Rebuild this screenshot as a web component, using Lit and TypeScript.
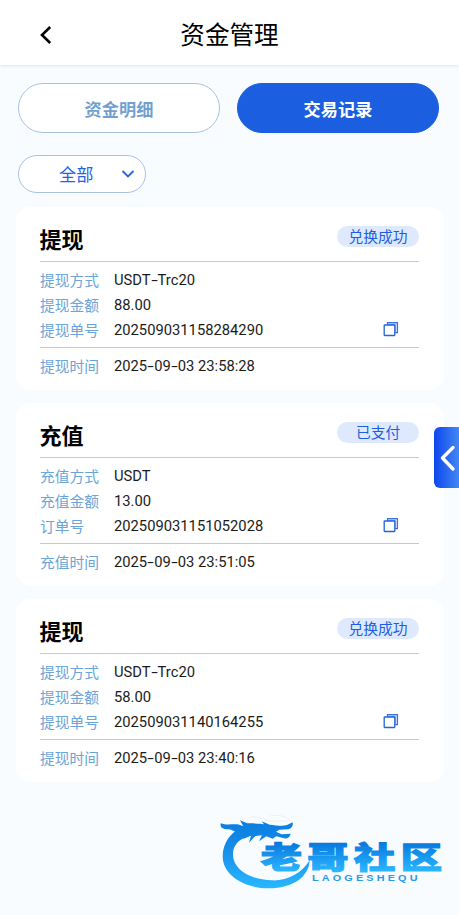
import { LitElement, html, css, svg, nothing } from "lit";
import { customElement, property, state } from "lit/decorators.js";

interface FundRecord {
  title: string;
  status: string;
  rows: { label: string; value: string; copy?: boolean }[];
  timeLabel: string;
  time: string;
}

const RECORDS: FundRecord[] = [
  {
    title: "提现",
    status: "兑换成功",
    rows: [
      { label: "提现方式", value: "USDT-Trc20" },
      { label: "提现金额", value: "88.00" },
      { label: "提现单号", value: "202509031158284290", copy: true },
    ],
    timeLabel: "提现时间",
    time: "2025-09-03 23:58:28",
  },
  {
    title: "充值",
    status: "已支付",
    rows: [
      { label: "充值方式", value: "USDT" },
      { label: "充值金额", value: "13.00" },
      { label: "订单号", value: "202509031151052028", copy: true },
    ],
    timeLabel: "充值时间",
    time: "2025-09-03 23:51:05",
  },
  {
    title: "提现",
    status: "兑换成功",
    rows: [
      { label: "提现方式", value: "USDT-Trc20" },
      { label: "提现金额", value: "58.00" },
      { label: "提现单号", value: "202509031140164255", copy: true },
    ],
    timeLabel: "提现时间",
    time: "2025-09-03 23:40:16",
  },
];

// Roboto's hyphen is very short, so hyphens get a wider box of their own
const wideHyphens = (text: string) =>
  text
    .split("-")
    .map((part, i) => (i ? html`<span class="hyphen">-</span>${part}` : part));

@customElement("record-card")
class RecordCard extends LitElement {
  static styles = css`
    :host {
      display: block;
      box-sizing: border-box;
      height: 183px;
      padding: 0 25px 0 24px;
      border-radius: 15px;
      background: #fff;
      font-size: 14.75px;
    }

    .head {
      display: flex;
      justify-content: space-between;
      box-sizing: border-box;
      height: 55px;
      border-bottom: 1px solid #bccae4;
    }

    .title {
      margin: 0 0 0 -0.5px;
      padding-top: 17px;
      font-size: 22px;
      line-height: 34px;
      font-weight: 700;
      color: #000;
    }

    .status {
      width: 82px;
      height: 21px;
      margin-top: 19px;
      border-radius: 11px;
      background: #dfe9fe;
      color: #1d5ce4;
      line-height: 22px;
      text-align: center;
    }

    .rows {
      box-sizing: border-box;
      height: 86px;
      padding-top: 5px;
      border-bottom: 1px solid #bccae4;
    }

    .row {
      display: flex;
      align-items: center;
      height: 25px;
    }

    .time {
      padding-top: 5px;
    }

    .label {
      width: 74px;
      color: #6ba4d8;
    }

    .value {
      flex: 1;
      color: #1b1b1b;
    }

    .hyphen {
      display: inline-block;
      width: 7px;
      text-align: center;
      transform: scaleX(1.6);
    }

    .copy {
      display: block;
      width: 16px;
      height: 16px;
      margin: -2px 20.5px 0 0;
    }
  `;

  @property({ attribute: false }) record!: FundRecord;

  render() {
    const { title, status, rows, timeLabel, time } = this.record;
    return html`
      <div class="head">
        <h2 class="title">${title}</h2>
        <div class="status">${status}</div>
      </div>
      <div class="rows">
        ${rows.map(
          row => html`<div class="row">
            <span class="label">${row.label}</span>
            <span class="value">${wideHyphens(row.value)}</span>
            ${row.copy
              ? html`<svg class="copy" viewBox="0 0 16 16" fill="none">
                  <path
                    d="M4.5 4V1.6h10v10h-2.7V4z"
                    fill="#c8dafb"
                    stroke="#3c70df"
                    stroke-width="1.1"
                  />
                  <rect
                    x="1.2"
                    y="4"
                    width="10.6"
                    height="10.5"
                    rx=".5"
                    fill="#fff"
                    stroke="#2463e0"
                    stroke-width="1.3"
                  />
                </svg>`
              : nothing}
          </div>`
        )}
      </div>
      <div class="row time">
        <span class="label">${timeLabel}</span>
        <span class="value">${wideHyphens(time)}</span>
      </div>
    `;
  }
}

@customElement("community-logo")
class CommunityLogo extends LitElement {
  static styles = css`
    :host {
      display: block;
      width: 249px;
      height: 90px;
      pointer-events: none;
    }

    svg {
      display: block;
      width: 100%;
      height: 100%;
    }

    .name {
      font: 900 96px "Noto Sans CJK SC", sans-serif;
    }

    .latin {
      font: 700 26px "Liberation Sans", sans-serif;
      letter-spacing: 7.6px;
    }
  `;

  render() {
    // each glyph is stretched sideways on its own so the gaps stay even
    const glyphs = [..."老哥社区"].map(
      (char, i) => svg`<text
        class="name"
        transform="translate(${152 + i * 140} 175) scale(1.29 .92)"
        fill="url(#name)"
        stroke="url(#name)"
        stroke-width="4"
      >${char}</text>`
    );
    return html`
      <svg viewBox="0 0 747 270">
        <defs>
          <linearGradient id="ring" x1="0" y1="30" x2="0" y2="236" gradientUnits="userSpaceOnUse">
            <stop offset="0" stop-color="#0a7ee0" />
            <stop offset=".35" stop-color="#1389e8" />
            <stop offset="1" stop-color="#2ab8ff" />
          </linearGradient>
          <linearGradient id="name" x1="0" y1="-84" x2="0" y2="8" gradientUnits="userSpaceOnUse">
            <stop offset="0" stop-color="#0878de" />
            <stop offset="1" stop-color="#2ab5ff" />
          </linearGradient>
        </defs>
        <g fill="url(#ring)">
          <path
            d="M98 50C62 65 38 100 38 139c0 56 62 95 137 96 68 1 121-30 124-84-24 40-68 62-113 60-68-2-116-34-117-76-1-26 14-45 44-56z"
          />
          <path
            d="M32 40c18 7 36 1 56 4l12 5-10-18 22 9c22 0 38 1 50 3l-7-9 24 10c20 2 39 5 52 1l17-8c2 11-3 18-13 21l-27 1-10 6 17 8 27-2c-2 10-10 16-20 14l-23-6-11 7-19-7-22 15 9-18-20 2-19 20 6-21-22 9c-10-10-26-25-45-28-11-1-27-1-24-18z"
          />
          <path d="M88 50l47-6-20 18 32-8-45 30-22-7z" />
        </g>
        <path
          d="M118 22c28-6 48 10 76 12 16 0 29-3 40 1M178 19c24-9 56 1 69 19"
          fill="none"
          stroke="#dce9f6"
          stroke-width="3"
          opacity=".6"
        />
        ${glyphs}
        <text class="latin" transform="translate(306 214) scale(1.25 1)" fill="#269be9">LAOGESHEQU</text>
      </svg>
    `;
  }
}

@customElement("app-root")
class AppRoot extends LitElement {
  static styles = css`
    :host {
      display: block;
      position: relative;
      box-sizing: border-box;
      height: 915px;
      overflow: hidden;
      background: #f8fcff;
      font-family: Roboto, "Noto Sans CJK SC", sans-serif;
    }

    .header {
      display: grid;
      grid-template-columns: 92px 1fr 92px;
      align-items: center;
      height: 65px;
      background: #fff;
      box-shadow: 0 1px 3px rgba(0, 0, 0, 0.1);
    }

    .back {
      width: 12px;
      height: 20px;
      margin: 5px 0 0 40px;
    }

    .heading {
      margin: 7px 0 0;
      font-size: 24.6px;
      line-height: 36px;
      font-weight: 400;
      text-align: center;
      color: #000;
    }

    .tabs {
      display: flex;
      gap: 17px;
      padding: 18px 20px 0 18px;
    }

    .tab {
      flex: 1;
      box-sizing: border-box;
      height: 50px;
      padding: 0;
      border: 1px solid #a9c1e4;
      border-radius: 26px;
      background: #fff;
      color: #739fcf;
      font: inherit;
      font-size: 17.2px;
      font-weight: 700;
    }

    .tab.active {
      border-color: #1b5fe0;
      background: #1b5fe0;
      color: #fff;
    }

    .filter {
      display: flex;
      align-items: center;
      justify-content: space-between;
      box-sizing: border-box;
      width: 128px;
      height: 38px;
      margin: 22px 0 14px 18px;
      padding: 0 10px 2px 40px;
      border: 1px solid #a9c1e4;
      border-radius: 19px;
      background: #fff;
      color: #2462e6;
      font-size: 17.2px;
    }

    .arrow {
      width: 14px;
      height: 10px;
      margin-top: 2px;
    }

    .list {
      display: flex;
      flex-direction: column;
      gap: 13px;
      padding: 0 15px 0 16px;
    }

    .drawer {
      position: absolute;
      top: 427px;
      right: 0;
      display: flex;
      align-items: center;
      width: 25px;
      height: 61px;
      border-radius: 6px 0 0 6px;
      background: linear-gradient(90deg, #0d46ee, #4387f3);
    }

    .drawer svg {
      width: 25px;
      height: 30px;
    }

    .logo {
      position: absolute;
      right: 0;
      bottom: 15px;
    }
  `;

  @state() tab = 1;

  render() {
    return html`
      <header class="header">
        <svg class="back" viewBox="0 0 12 20" fill="none">
          <path d="M10.2 2 2 10l8.2 8" stroke="#000" stroke-width="2.6" />
        </svg>
        <h1 class="heading">资金管理</h1>
      </header>
      <nav class="tabs">
        ${["资金明细", "交易记录"].map(
          (name, i) => html`<button
            class="tab ${i === this.tab ? "active" : ""}"
            @click=${() => (this.tab = i)}
          >
            ${name}
          </button>`
        )}
      </nav>
      <div class="filter">
        <span>全部</span>
        <svg class="arrow" viewBox="0 0 14 10" fill="none">
          <path d="M1.5 2 7 7.4 12.5 2" stroke="#2462e6" stroke-width="1.8" />
        </svg>
      </div>
      <main class="list">
        ${RECORDS.map(
          record => html`<record-card .record=${record}></record-card>`
        )}
      </main>
      <div class="drawer">
        <svg viewBox="0 0 25 30" fill="none">
          <path
            d="M19 4.5 8.5 15 19 26"
            stroke="#fff"
            stroke-width="3.4"
            stroke-linecap="round"
            stroke-linejoin="round"
          />
        </svg>
      </div>
      <community-logo class="logo"></community-logo>
    `;
  }
}

export { AppRoot, CommunityLogo, RecordCard };
